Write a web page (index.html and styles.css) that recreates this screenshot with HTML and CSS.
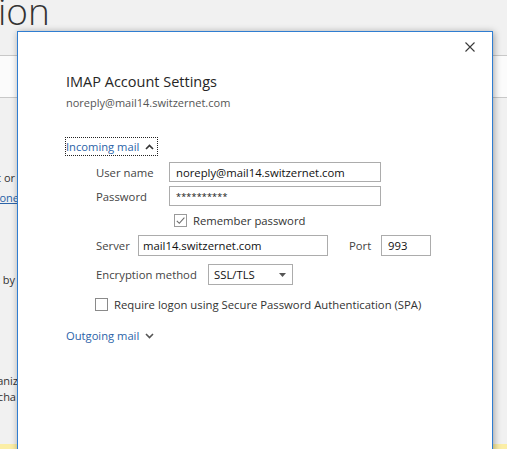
FILE: index.html
```html
<!DOCTYPE html>
<html>
<head>
<meta charset="utf-8">
<link rel="stylesheet" href="styles.css">
</head>
<body>
<div class="page">
  <div class="bg">
    <div class="bg-title"><span class="bg-title-text">ion</span></div>
    <div class="bg-box"></div>
    <div class="bg-text">
      <div class="bg-line l1">account or</div>
      <div class="bg-line link l2">phone</div>
      <div class="bg-line l3">account by</div>
      <div class="bg-line l4">organiz</div>
      <div class="bg-line l5">cha</div>
    </div>
    <div class="bg-yellow"></div>
  </div>

  <div class="dialog">
    <div class="dialog-head">
      <svg class="close" width="10" height="10" viewBox="0 0 10 10"><path d="M0.5 0.5 L9.5 9.5 M9.5 0.5 L0.5 9.5" stroke="#3a3a3a" stroke-width="1.1" fill="none"/></svg>
    </div>
    <div class="dialog-body">
      <div class="title">IMAP Account Settings</div>
      <div class="subtitle">noreply@mail14.switzernet.com</div>

      <div class="toggle toggle-open">
        <span>Incoming mail</span>
        <svg width="9" height="6" viewBox="0 0 9 6"><path d="M1 5 L4.5 1.5 L8 5" stroke="#333" stroke-width="1.6" fill="none"/></svg>
      </div>

      <div class="form">
        <div class="row r1">
          <span class="lbl lbl-user">User name</span>
          <div class="field f-user">noreply@mail14.switzernet.com</div>
        </div>
        <div class="row r2">
          <span class="lbl lbl-user">Password</span>
          <div class="field f-user f-pass">**********</div>
        </div>
        <div class="row r3">
          <span class="check checked"><svg width="11" height="11" viewBox="0 0 11 11"><path d="M1.8 5.8 L4.3 8.3 L9.4 2.6" stroke="#6a6a6a" stroke-width="1.1" fill="none"/></svg></span>
          <span class="check-text">Remember password</span>
        </div>
        <div class="row r4">
          <span class="lbl lbl-server">Server</span>
          <div class="field f-server">mail14.switzernet.com</div>
          <span class="lbl lbl-port">Port</span>
          <div class="field f-port">993</div>
        </div>
        <div class="row r5">
          <span class="lbl lbl-enc">Encryption method</span>
          <div class="field select">
            <span>SSL/TLS</span>
            <svg width="7" height="4" viewBox="0 0 7 4"><path d="M0 0 L7 0 L3.5 4 Z" fill="#555"/></svg>
          </div>
        </div>
        <div class="row r6">
          <span class="check"></span>
          <span class="check-text">Require logon using Secure Password Authentication (SPA)</span>
        </div>
      </div>

      <div class="toggle toggle-closed">
        <span>Outgoing mail</span>
        <svg width="9" height="6" viewBox="0 0 9 6"><path d="M1 1 L4.5 4.5 L8 1" stroke="#555" stroke-width="1.6" fill="none"/></svg>
      </div>
    </div>
  </div>
</div>
</body>
</html>
```

FILE: styles.css
```css
html, body {
  margin: 0;
  padding: 0;
}

body {
  font-family: "Open Sans", "Noto Sans", "Liberation Sans", sans-serif;
  background: #f1f1f1;
  color: #333;
}

.page {
  position: relative;
  width: 507px;
  height: 449px;
  overflow: hidden;
}

/* background application page */
.bg {
  display: flex;
  flex-direction: column;
  height: 449px;
}

.bg-title {
  height: 55px;
  overflow: hidden;
}

.bg-title-text {
  display: block;
  margin-top: -9px;
  margin-left: -2px;
  font-size: 37px;
  line-height: 40px;
  font-weight: 300;
  color: #333;
}

.bg-box {
  height: 41px;
  border-top: 1px solid #c8c8c8;
  border-bottom: 1px solid #c8c8c8;
  background: #fbfbfb;
}

.bg-text {
  width: 17px;
  overflow: hidden;
  margin-top: 72px;
  display: flex;
  flex-direction: column;
}

.bg-line {
  display: flex;
  justify-content: flex-end;
  white-space: nowrap;
  font-size: 11px;
  line-height: 16px;
  color: #333;
  padding-right: 2px;
}

.bg-line.link {
  color: #2b63a8;
  text-decoration: underline;
  padding-right: 0;
  margin-right: -2px;
}

.l2 { margin-top: 4px; }
.l3 { margin-top: 66px; }
.l4 { margin-top: 85px; padding-right: 0; margin-right: -1px; }
.l5 { margin-top: 0; padding-right: 1px; }

.bg-yellow {
  margin-top: auto;
  height: 5px;
  background: #fbeea6;
}

/* dialog */
.dialog {
  position: absolute;
  left: 17px;
  top: 31px;
  width: 474px;
  height: 440px;
  background: #fff;
  border: 1px solid #2f7dd1;
  box-shadow: 1px 1px 7px rgba(0, 0, 0, 0.35);
}

.dialog-head {
  display: flex;
  justify-content: flex-end;
  padding: 10px 17px 0 0;
}

.close {
  display: block;
}

.dialog-body {
  padding-left: 48px;
}

.title {
  margin-top: 20px;
  font-size: 14.5px;
  line-height: 20px;
  color: #262626;
}

.subtitle {
  margin-top: 3px;
  font-size: 11px;
  line-height: 16px;
  color: #555;
}

.toggle {
  display: flex;
  align-items: center;
  width: max-content;
  gap: 6px;
  font-size: 11.2px;
  color: #2b63a8;
  box-sizing: border-box;
  height: 19px;
}

.toggle svg {
  display: block;
}

.toggle-open {
  margin-top: 26px;
  margin-left: -1px;
  border: 1px dotted #222;
  padding: 0 3px 0 0;
}

.toggle-closed {
  margin-top: 14px;
}

.form {
  padding-left: 30px;
}

.row {
  display: flex;
  align-items: center;
  font-size: 11.3px;
  color: #444;
}

.r1 { margin-top: 6px; }
.r2 { margin-top: 4px; }
.r3 { margin-top: 6px; height: 16px; padding-left: 78px; }
.r4 { margin-top: 7px; }
.r5 { margin-top: 8px; }
.r6 { margin-top: 11px; height: 16px; margin-left: -1px; }

.lbl {
  flex: none;
}

.lbl-user { width: 73px; }
.lbl-server { width: 42px; }
.lbl-port { width: 32px; margin-left: 21px; }
.lbl-enc { width: 112px; }

.field {
  box-sizing: border-box;
  height: 20px;
  border: 1px solid #acacac;
  background: #fff;
  color: #111;
  display: flex;
  align-items: center;
  padding-left: 6px;
  white-space: nowrap;
  overflow: hidden;
}

.f-user { width: 212px; }
.f-pass { font-size: 9px; letter-spacing: 0.2px; }
.f-server { width: 190px; height: 21px; padding-left: 4px; }
.f-port { width: 50px; height: 21px; padding-left: 6px; }

.select {
  width: 85px;
  height: 21px;
  padding-left: 5px;
  padding-right: 6px;
  justify-content: space-between;
}

.check {
  box-sizing: border-box;
  width: 13px;
  height: 13px;
  border: 1px solid #8a8a8a;
  background: #fff;
  display: flex;
  align-items: center;
  justify-content: center;
  flex: none;
}

.check.checked {
  border-color: #9a9a9a;
}

.check svg {
  display: block;
}

.check-text {
  margin-left: 6px;
  color: #333;
}
```
